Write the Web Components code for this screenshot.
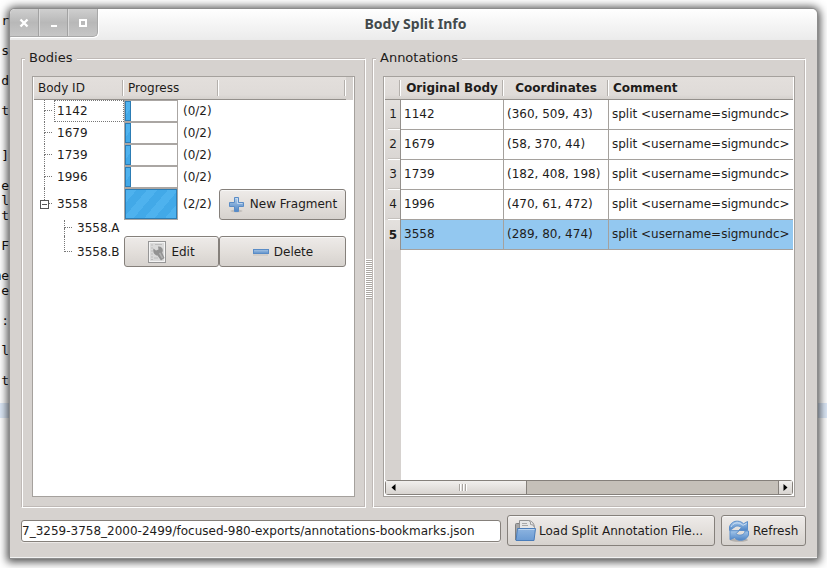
<!DOCTYPE html>
<html lang="en">
<head>
<meta charset="utf-8">
<title>Body Split Info</title>
<style>
  html, body { margin: 0; height: 100%; }
  body {
    --face: #d6d2cf; --line: #a5a19d; --etch: #bfb9b6; --ink: #1e1c1b;
    font: 12px/16px "DejaVu Sans", sans-serif; color: var(--ink);
    box-sizing: border-box; min-height: 100vh; padding: 8px 9px 9px 9px;
    display: flex; position: relative; overflow: hidden; background: #fff;
  }
</style>
</head>
<body>
<terminal-backdrop></terminal-backdrop>
<dialog-window heading="Body Split Info">
  <split-panes>
    <group-box slot="first" label="Bodies"><body-tree></body-tree></group-box>
    <group-box slot="second" label="Annotations"><annotation-table></annotation-table></group-box>
  </split-panes>
  <file-bar></file-bar>
</dialog-window>

<script>
const define = (name, html, setup) => {
  const tpl = document.createElement('template');
  tpl.innerHTML = html;
  customElements.define(name, class extends HTMLElement {
    constructor() {
      super();
      this.attachShadow({ mode: 'open' }).append(tpl.content.cloneNode(true));
    }
    connectedCallback() { if (setup) setup(this, this.shadowRoot); }
  });
};

const ICONS = {
  plus: `<svg width="17" height="17" viewBox="0 0 17 17"><defs><linearGradient id="g" x2="0" y2="1"><stop stop-color="#b4cfea"/><stop offset="1" stop-color="#4f86c6"/></linearGradient></defs><ellipse cx="8.500" cy="15" rx="6" ry="1.500" fill="#000" opacity=".12"/><path d="M6.500 1.500h4v5h5v4h-5v5h-4v-5h-5v-4h5z" fill="url(#g)" stroke="#5a8cc6"/><path d="M7.500 2.500h2v5h5" fill="none" stroke="#d5e5f5" opacity=".7"/></svg>`,
  minus: `<svg width="17" height="17" viewBox="0 0 17 17"><defs><linearGradient id="g" x2="0" y2="1"><stop stop-color="#a8c5e4"/><stop offset="1" stop-color="#5e91cb"/></linearGradient></defs><path d="M1 12h15" stroke="#000" opacity=".12"/><rect x="1.500" y="6.500" width="15" height="4" fill="url(#g)" stroke="#5a8cc6"/></svg>`,
  edit: `<svg width="18" height="22" viewBox="0 0 18 22"><rect x=".5" y=".5" width="17" height="21" fill="#dadada" stroke="#969696"/><rect x="1.500" y="1.500" width="15" height="19" fill="none" stroke="#f4f4f4"/><path d="M3 4h2M3 7h2M3 10h2M3 13h2M3 16h2M3 18.500h2M7 3.500h7M6 17h4" stroke="#bcbcbc"/><path d="M5.500 7.500L8 9.500l2.500-1L10 5.500c4-.5 6 3 4.200 6.100L16.500 17l-3.500 2.500-3.500-5C6.500 14.500 4.500 11.500 5.500 7.500z" fill="#939393"/><path d="M11.500 12l3 5" stroke="#b2b2b2" stroke-width="1.500"/></svg>`,
  folder: `<svg width="22" height="23" viewBox="0 0 22 23"><defs><linearGradient id="g" x2="0" y2="1"><stop stop-color="#8db4e0"/><stop offset="1" stop-color="#6b9bd3"/></linearGradient></defs><path d="M1.500 21V5.500q0-1 1-1H6v4" fill="#a7a7a7" stroke="#808080"/><path d="M5.500 13V1.500h9.500q5 1 5.500 7V13z" fill="#e6e6e6" stroke="#929292"/><path d="M14.500 1.500q3 1 2 4 3-.5 4 3" fill="#f8f8f8" stroke="#9c9c9c"/><path d="M8 4.500h5M8 6.500h6" stroke="#a8a8a8"/><path d="M3.500 9.500h18l-1.500 12H2z" fill="url(#g)" stroke="#4a7dba"/><path d="M4.500 10.500h16" stroke="#b9d3ee"/></svg>`,
  refresh: `<svg width="22" height="22" viewBox="0 0 22 22"><defs><linearGradient id="g" x2="0" y2="1"><stop stop-color="#a7c8ea"/><stop offset="1" stop-color="#4d84c6"/></linearGradient></defs><ellipse cx="11" cy="20" rx="9" ry="1.800" opacity=".18"/><path d="M1.500 10.500V7C2.500 3 6 1 9.500 1.200c2.500 0 4.500 1 6 2.600l4-2.300v9h-9l3-2.800c-2-2-6-2.500-8 .3z" fill="url(#g)" stroke="#5c8fcb"/><path d="M20.500 11v4c-1 3.500-4.500 5.300-8 5.300-2.500 0-4.500-1-6-2.600l-4.500 2v-9h9l-3 3c2 2 6 2 8-.2.800-.8 1-1.600 1-2.500z" fill="url(#g)" stroke="#5c8fcb"/><path d="M3 7c2-4 7-6 12-1.700L18.500 3.500" fill="none" stroke="#dbe9f7" opacity=".8"/></svg>`
};

/* Editor text that shows at the edges behind the window */
define('terminal-backdrop', `
<style>
  :host { position: absolute; inset: 0; overflow: hidden; }
  pre { margin: 0; padding-top: 13px; width: 9px; font: 13px/15px "DejaVu Sans Mono", monospace; color: #111; }
  pre span { display: flex; justify-content: flex-end; height: 15px; }
  .mark { height: 15px; margin-top: 15px; background: #dde9f8; }
</style><pre></pre><div class="mark"></div>`, (el, root) => {
  const lines = ['r','','s','','d','','t','','',']','','e','l','t','','F','','me','e','',':','','l','','t'];
  root.querySelector('pre').replaceChildren(...lines.map(t => {
    const s = document.createElement('span'); s.textContent = t; return s;
  }));
});

define('dialog-window', `
<style>
  :host { position: relative; flex: 1; min-width: 0; box-sizing: border-box; display: flex; flex-direction: column;
    border: 1px solid #8c8c8c; border-radius: 6px 6px 0 0; background: var(--face);
    box-shadow: 0 1px 9px 2px rgba(0,0,0,.7); }
  header { display: grid; grid-template-columns: 88px 1fr 84px; height: 31px; border-radius: 5px 5px 0 0;
    background: linear-gradient(#fff, #ebebeb); }
  nav { display: flex; height: 27px; border-right: 1px solid #a8a8a8; border-bottom: 1px solid #a8a8a8;
    border-radius: 5px 0 5px 0; box-shadow: 1px 1px #fff; overflow: hidden; background: linear-gradient(#cfcfcf, #b8b8b8 50%, #c6c6c6); }
  nav button { flex: 1; padding: 0; border: 0; border-left: 1px solid #dadada; border-right: 1px solid #a2a2a2; background: none;
    display: grid; place-items: center; }
  nav button:first-child { border-left: 0; } nav button:last-child { border-right: 0; }
  h1 { margin: 0; font: bold 14px/30px "Noto Sans", sans-serif; text-align: center; color: #434a4c; text-shadow: 0 1px #fff; }
  main { flex: 1; display: flex; flex-direction: column; gap: 7px; padding: 9px 11px 11px; border-bottom: 1px solid #f2f2f2; }
</style>
<header>
  <nav aria-label="Window">
    <button aria-label="Close"><svg width="10" height="10" viewBox="0 0 10 10"><path d="M1.500 1.500l7 7M8.500 1.500l-7 7" stroke="#fff" stroke-width="2.400"/></svg></button>
    <button aria-label="Minimize"><svg width="10" height="10" viewBox="0 0 10 10"><path d="M2 8h6" stroke="#fff" stroke-width="2"/></svg></button>
    <button aria-label="Maximize"><svg width="10" height="10" viewBox="0 0 10 10"><rect x="2" y="2" width="6" height="6" fill="none" stroke="#fff" stroke-width="2"/></svg></button>
  </nav>
  <h1></h1>
</header>
<main><slot></slot></main>`, (el, root) => { root.querySelector('h1').textContent = el.getAttribute('heading'); });

define('split-panes', `
<style>
  :host { flex: 1; display: grid; grid-template-columns: minmax(0, 345fr) 6px minmax(0, 434fr); }
  .grip { align-self: center; height: 40px; }
  .grip { background: repeating-linear-gradient(#fff 0 1px, #aaa6a2 1px 2px); }
</style>
<slot name="first"></slot><div class="grip" role="separator"></div><slot name="second"></slot>`);

define('group-box', `
<style>
  :host { position: relative; display: flex; flex-direction: column; padding: 0 11px 11px; }
  .frame { position: absolute; inset: 9px 0 0 0; border: 1px solid; border-color: var(--etch) #fff #fff var(--etch);
    box-shadow: inset 1px 1px #fff, inset -1px -1px var(--etch); }
  .label { position: relative; align-self: flex-start; background: var(--face); margin: 0 0 9px -7px; padding: 0 4px 0 4px; font-size: 13px; line-height: 18px; }
  ::slotted(*) { position: relative; flex: 1; }
</style>
<div class="frame"></div><div class="label" id="l"></div><slot></slot>`, (el, root) => {
  root.querySelector('.label').textContent = el.getAttribute('label');
  el.setAttribute('role', 'group'); el.setAttribute('aria-label', el.getAttribute('label'));
});

define('tool-button', `
<style>
  :host { display: block; }
  button { box-sizing: border-box; width: 100%; height: 31px; display: flex; align-items: center; justify-content: center; gap: 5px;
    padding: 0 5px; border: 1px solid #85807b; border-radius: 3px; font: inherit; color: inherit; white-space: nowrap;
    background: linear-gradient(#eeebe9, #e2deda 55%, #d6d2ce); box-shadow: inset 0 1px #f8f7f6; }
  :host([tight]) button { gap: 3px; justify-content: flex-start; padding: 0 6px; }
  svg { display: block; } i { flex: none; }
</style>
<button><i></i><slot></slot></button>`, (el, root) => { root.querySelector('i').innerHTML = ICONS[el.getAttribute('icon')]; });

define('body-tree', `
<style>
  :host { display: block; border: 1px solid var(--line); padding: 0 1px 1px; background: #fff; }
  table { width: 100%; table-layout: fixed; border-collapse: separate; border-spacing: 0; }
  th, td { padding: 0; text-align: left; font-weight: normal; }
  th { height: 22px; border-bottom: 1px solid #94908c; background: linear-gradient(#e3dfdc, #dfdbd8 80%, #d5d1cd); }
  th span { display: block; padding-left: 4px; line-height: 16px; border-right: 1px solid #fff; box-shadow: inset -1px 0 #b4b0ac; min-height: 16px; }
  th:last-child { background: var(--face); border-color: var(--face); }
  th:last-child span { display: none; }
  .node { display: flex; height: 22px; align-items: center; }
  .branch { flex: none; align-self: stretch; width: 10px; padding-left: 10px; display: grid; grid-template-rows: 1fr 1fr; position: relative; color: #777; }
  .branch b { border-left: 1px dotted; }
  .branch b:first-child { border-bottom: 1px dotted; margin-right: 2px; }
  .end .branch b:last-of-type { border: 0; }
  .child { padding-left: 20px; }
  .name { padding: 0 3px; border: 0 dotted #777; }
  .focus .name { flex: 1; box-sizing: border-box; height: 22px; border-width: 1px; padding: 2px 2px; }
  .toggle { position: absolute; left: 6px; top: calc(50% - 4px); width: 9px; height: 9px; padding: 0; border: 1px solid #555; background: linear-gradient(#555, #555) center / 5px 1px no-repeat #fff; }
  .tall .node { height: 32px; } .short .node { height: 16px; } .row31 .node { height: 31px; }
  .bar { display: flex; align-items: center; gap: 5px; height: 22px; }
  .tall .bar { height: 32px; }
  progress { appearance: none; -webkit-appearance: none; box-sizing: border-box; width: 54px; height: 100%; border: 1px solid #aaa6a3; background: #fff; }
  progress::-webkit-progress-bar { background: #fff; }
  progress::-webkit-progress-value { min-width: 6px; box-sizing: border-box; border: 1px solid #2c7cb4;
    background: repeating-linear-gradient(130deg, #4eb2ee 0 8px, #42a9e8 8px 16px); }
</style>
<table aria-label="Bodies">
  <colgroup><col style="width:90px"><col style="width:95px"><col><col style="width:7px"></colgroup>
  <thead><tr><th><span>Body ID</span></th><th><span>Progress</span></th><th><span></span></th><th></th></tr></thead>
  <tbody></tbody>
</table>`, (el, root) => {
  const row = (cls, node, id, mid, last) => `<tr class="${cls}"><td><div class="node ${node}"><div class="branch"><b></b><b></b>${cls === 'tall' ? '<button class="toggle" aria-label="Collapse 3558"></button>' : ''}</div><span class="name">${id}</span></div></td><td>${mid}</td><td>${last}</td><td></td></tr>`;
  const bar = (v, id) => `<div class="bar"><progress max="2" value="${v}" aria-label="Progress of ${id}"></progress><span>(${v}/2)</span></div>`;
  root.querySelector('tbody').innerHTML =
    row('focus', '', '1142', bar(0, 1142), '') +
    ['1679', '1739', '1996'].map(n => row('', '', n, bar(0, n), '')).join('') +
    row('tall', 'end', '3558', bar(2, 3558), '<tool-button icon="plus">New Fragment</tool-button>') +
    row('short', 'child', '3558.A', '', '') +
    row('row31', 'child end', '3558.B', '<tool-button icon="edit">Edit</tool-button>', '<tool-button icon="minus">Delete</tool-button>');
});

define('scroll-strip', `
<style>
  :host { display: flex; height: 15px; box-sizing: border-box; border: 1px solid #85807b; border-radius: 3px; background: #c5c0b9; }
  button { width: 14px; padding: 0; border: 0; display: grid; place-items: center; background: linear-gradient(#f1efed, #d8d4d0); }
  button:first-child { border-right: 1px solid #85807b; } button:last-child { border-left: 1px solid #85807b; margin-left: auto; }
  .thumb { width: 31%; border-right: 1px solid #85807b; background: linear-gradient(#f1efed, #d8d4d0); display: grid; place-items: center; }
  .thumb i { width: 8px; height: 7px; background: repeating-linear-gradient(90deg, #a9a5a1 0 1px, #fff 1px 2px, transparent 2px 3px); }
</style>
<button aria-label="Scroll left"><svg width="5" height="7" viewBox="0 0 5 7"><path d="M4.500 0v7L.5 3.500z"/></svg></button>
<div class="thumb"><i></i></div>
<button aria-label="Scroll right"><svg width="5" height="7" viewBox="0 0 5 7"><path d="M.5 0v7l4-3.500z"/></svg></button>`);

define('annotation-table', `
<style>
  :host { display: flex; flex-direction: column; border: 1px solid var(--line); padding: 0 1px 1px; background: #fff; min-width: 0; }
  .view { flex: 1; overflow: hidden; background: linear-gradient(90deg, var(--face) 16px, #fff 16px); }
  table { width: 100%; table-layout: fixed; border-collapse: separate; border-spacing: 0; }
  th, td { padding: 0; text-align: left; white-space: nowrap; overflow: hidden; box-sizing: border-box; }
  thead th { height: 23px; border-bottom: 1px solid #94908c; background: linear-gradient(#e3dfdc, #dfdbd8 80%, #d5d1cd); }
  thead th span { display: block; line-height: 16px; min-height: 16px; border-right: 1px solid #fff; box-shadow: inset -1px 0 #b4b0ac; }
  thead th:not(:last-child) span { text-align: center; } thead th:last-child span { padding-left: 4px; border: 0; box-shadow: none; }
  tbody th { font-weight: normal; text-align: center; border-right: 1px solid #94908c; background: linear-gradient(#e4e1de, #d9d5d2); height: 30px; }
  tbody th span { display: block; line-height: 28px; margin-left: 3px; border-bottom: 1px solid #fff; box-shadow: inset 0 -1px #c5c1bd; height: 29px; }
  tbody th span { padding-right: 2px; }
  td { height: 30px; padding: 0 3px 1px; border-right: 1px solid var(--line); border-bottom: 1px solid var(--line); background: #fff; }
  td:last-child { border-right: 0; padding-right: 0; }
  .sel td { background: #93c8f0; } .sel th { font-weight: bold; } .sel th span { border: 0; box-shadow: none; }
</style>
<div class="view"><table aria-label="Annotations">
  <colgroup><col style="width:16px"><col style="width:103px"><col style="width:105px"><col></colgroup>
  <thead><tr><th><span></span></th><th><span>Original Body</span></th><th><span>Coordinates</span></th><th><span>Comment</span></th></tr></thead>
  <tbody></tbody>
</table></div><scroll-strip></scroll-strip>`, (el, root) => {
  const data = [['1142', '(360, 509, 43)'], ['1679', '(58, 370, 44)'], ['1739', '(182, 408, 198)'], ['1996', '(470, 61, 472)'], ['3558', '(289, 80, 474)']];
  root.querySelector('tbody').innerHTML = data.map(([id, xyz], i) =>
    `<tr class="${i === 4 ? 'sel' : ''}"><th scope="row"><span>${i + 1}</span></th><td>${id}</td><td>${xyz}</td><td>split &lt;username=sigmundc&gt;</td></tr>`).join('');
});

define('file-bar', `
<style>
  :host { display: flex; align-items: center; gap: 6px; }
  input { flex: 1; min-width: 0; box-sizing: border-box; height: 22px; padding: 0; border: 1px solid #85807b; border-radius: 3px; background: #fff;
    font: inherit; color: inherit; box-shadow: 0 1px #ece9e7; }
  tool-button.load { width: 208px; } tool-button.re { width: 85px; }
</style>
<input type="text" aria-label="Annotation file" value="7_3259-3758_2000-2499/focused-980-exports/annotations-bookmarks.json">
<tool-button class="load" icon="folder" tight>Load Split Annotation File...</tool-button>
<tool-button class="re" icon="refresh" tight>Refresh</tool-button>`);
</script>
</body>
</html>
